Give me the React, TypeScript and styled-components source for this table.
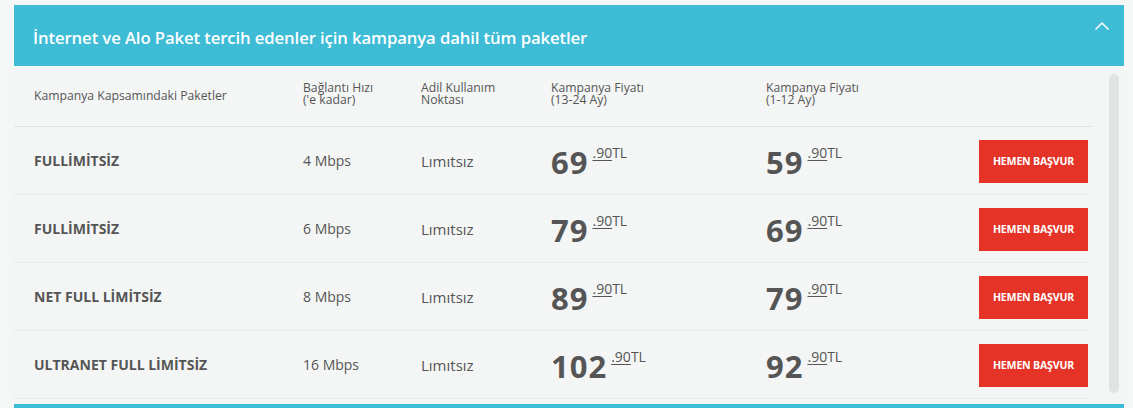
import React from "react";
import styled, { createGlobalStyle } from "styled-components";

const Global = createGlobalStyle`
  html, body { margin: 0; padding: 0; background: #f5f6f6; }
  body { font-family: "Open Sans", "Liberation Sans", sans-serif; color: #555; }
  * { box-sizing: border-box; }
`;

const Page = styled.div`
  width: 1133px;
  height: 408px;
  overflow: hidden;
  padding: 5px 9px 0 14px;
`;

const Panel = styled.section`
  width: 1110px;
  display: flex;
  flex-direction: column;
`;

const Header = styled.div`
  height: 61px;
  background: #3ebcd6;
  display: flex;
  align-items: center;
  justify-content: space-between;
  padding: 0 14px 0 19px;
`;

const Title = styled.h2`
  margin: 0;
  font-size: 16.7px;
  font-weight: 600;
  color: #fff;
  letter-spacing: -0.1px;
  padding-top: 4px;
`;

const Chevron = styled.svg`
  width: 16px;
  height: 10px;
  margin-top: -20px;
`;

const Body = styled.div`
  display: flex;
  background: #f4f5f5;
  padding-bottom: 5px;
`;

const Table = styled.div`
  width: 1078px;
  display: flex;
  flex-direction: column;
`;

const Grid = styled.div<{ $head?: boolean }>`
  display: grid;
  grid-template-columns: 269px 118px 130px 215px 213px 109px;
  align-items: center;
  height: ${(p) => (p.$head ? "61px" : "68px")};
  padding-left: 20px;
  border-bottom: 1px solid ${(p) => (p.$head ? "#e3e4e4" : "#ebecec")};
`;

const HeadCell = styled.div<{ $offset?: number }>`
  font-size: 12.2px;
  line-height: 12px;
  color: #555;
  margin-top: ${(p) => p.$offset ?? 0}px;
`;

const NameCell = styled.div`
  font-size: 14px;
  font-weight: 700;
  color: #555;
`;

const TextCell = styled.div<{ $wide?: boolean }>`
  font-size: ${(p) => (p.$wide ? "15px" : "14px")};
  color: #555;
`;

const Price = styled.div`
  display: flex;
  align-items: flex-start;
  color: #555;
  margin-top: 2px;
`;

const Whole = styled.span`
  font-size: 31px;
  font-weight: 700;
  line-height: 30px;
  letter-spacing: 1px;
`;

const Fraction = styled.span`
  font-size: 14px;
  line-height: 12px;
  margin-left: 4px;
  u { text-decoration-thickness: 1px; text-underline-offset: 2px; }
`;

const Button = styled.button`
  width: 109px;
  height: 43px;
  border: 0;
  background: #e53327;
  color: #fff;
  font-family: "Open Sans", "Liberation Sans", sans-serif;
  font-weight: 700;
  font-size: 10.6px;
  letter-spacing: -0.2px;
  padding: 0;
  margin-top: 1px;
  cursor: pointer;
`;

const Track = styled.div`
  width: 32px;
  display: flex;
  justify-content: center;
  padding: 8px 0 6px 12px;
`;

const Thumb = styled.div`
  width: 10px;
  height: 100%;
  border-radius: 5px;
  background: #e2e3e3;
`;

const Next = styled.div`
  height: 10px;
  background: #3ebcd6;
`;

const rows = [
  { name: "FULLİMİTSİZ", speed: "4 Mbps", p1: "69", p2: "59" },
  { name: "FULLİMİTSİZ", speed: "6 Mbps", p1: "79", p2: "69" },
  { name: "NET FULL LİMİTSİZ", speed: "8 Mbps", p1: "89", p2: "79" },
  { name: "ULTRANET FULL LİMİTSİZ", speed: "16 Mbps", p1: "102", p2: "92" },
];

function PriceTag({ v }: { v: string }) {
  return (
    <Price>
      <Whole>{v}</Whole>
      <Fraction>
        <u>.90</u>TL
      </Fraction>
    </Price>
  );
}

export default function App() {
  return (
    <>
      <Global />
      <Page>
        <Panel>
          <Header>
            <Title>İnternet ve Alo Paket tercih edenler için kampanya dahil tüm paketler</Title>
            <Chevron viewBox="0 0 16 10" fill="none">
              <path d="M1.5 8.5 L8 2 L14.5 8.5" stroke="#fff" strokeWidth="1.5" />
            </Chevron>
          </Header>
          <Body>
            <Table>
              <Grid $head>
                <HeadCell>Kampanya Kapsamındaki Paketler</HeadCell>
                <HeadCell $offset={-5}>Bağlantı Hızı<br />('e kadar)</HeadCell>
                <HeadCell $offset={-5}>Adil Kullanım<br />Noktası</HeadCell>
                <HeadCell $offset={-5}>Kampanya Fiyatı<br />(13-24 Ay)</HeadCell>
                <HeadCell $offset={-5}>Kampanya Fiyatı<br />(1-12 Ay)</HeadCell>
                <div />
              </Grid>
              {rows.map((r, i) => (
                <Grid key={i}>
                  <NameCell>{r.name}</NameCell>
                  <TextCell>{r.speed}</TextCell>
                  <TextCell $wide>Lımıtsız</TextCell>
                  <PriceTag v={r.p1} />
                  <PriceTag v={r.p2} />
                  <Button>HEMEN BAŞVUR</Button>
                </Grid>
              ))}
            </Table>
            <Track>
              <Thumb />
            </Track>
          </Body>
          <Next />
        </Panel>
      </Page>
    </>
  );
}
